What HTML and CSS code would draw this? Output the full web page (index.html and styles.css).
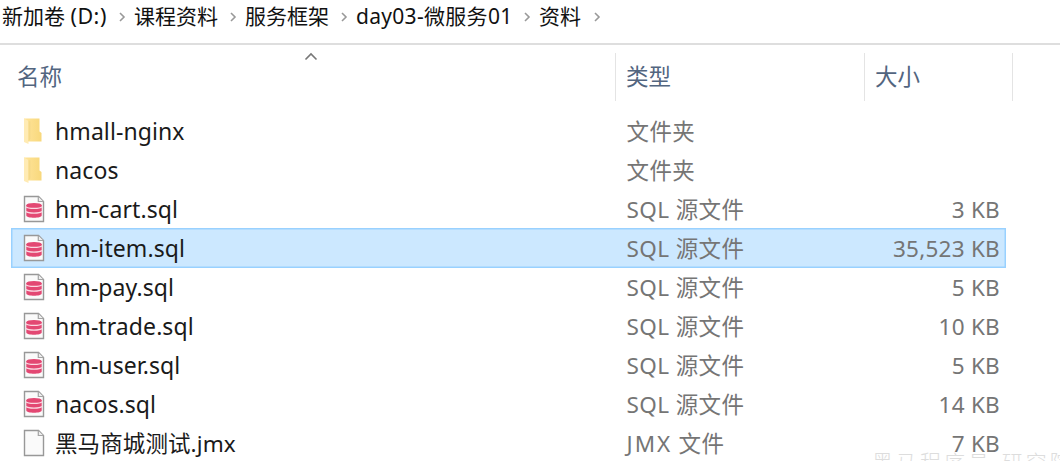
FILE: index.html
```html
<!DOCTYPE html>
<html lang="zh-CN">
<head>
<meta charset="utf-8">
<title>资料</title>
<link rel="stylesheet" href="styles.css">
</head>
<body>
<svg class="defs" width="0" height="0" aria-hidden="true">
  <defs>
    <linearGradient id="fold" x1="0" x2="1"><stop offset="0" stop-color="#ffe49a"/><stop offset="1" stop-color="#f8d87c"/></linearGradient>
    <symbol id="folder" viewBox="0 0 22 28">
      <path d="M1 1.500H16.500V14.500L18.500 16V24.500H5L1 23Z" fill="url(#fold)"/>
      <path d="M1 1.500L5.500 4V27L1 25Z" fill="#ffebb4"/>
      <path d="M5.500 24.500L7.500 22V4.500L5.500 4Z" fill="#f5d98a"/>
    </symbol>
    <symbol id="page" viewBox="0 0 22 28">
      <path d="M1.500 1.500H15.500L20.500 6.500V26.500H1.500Z" fill="#fafafa" stroke="#989898" stroke-width="1.400"/>
      <path d="M15.300 1.700V6.500H20.300" fill="#eee" stroke="#a4a4a4" stroke-width="1.200"/>
    </symbol>
    <symbol id="sql" viewBox="0 0 22 28">
      <use href="#page"/>
      <path d="M3.300 10V20.500C3.300 23.500 18.700 23.500 18.700 20.500V10Z" fill="#e34873"/>
      <ellipse cx="11" cy="10.200" rx="7.700" ry="2.300" fill="#e34873"/>
      <path d="M3 11.800C5 13.900 17 13.900 19 11.800M3 16.500C5 18.600 17 18.600 19 16.500" fill="none" stroke="#fbd9e3" stroke-width="1.100"/>
    </symbol>
    <symbol id="chev" viewBox="0 0 8 12"><path d="M2 2L6 6L2 10" fill="none" stroke="#999" stroke-width="1.600"/></symbol>
  </defs>
</svg>
<main class="explorer">
  <nav class="crumbs">
    <span class="crumb drive">新加卷 <span class="letter">(D:)</span></span><svg class="chev"><use href="#chev"/></svg>
    <span class="crumb four">课程资料</span><svg class="chev"><use href="#chev"/></svg>
    <span class="crumb four">服务框架</span><svg class="chev"><use href="#chev"/></svg>
    <span class="crumb day">day03-微服务01</span><svg class="chev"><use href="#chev"/></svg>
    <span class="crumb two">资料</span><svg class="chev"><use href="#chev"/></svg>
  </nav>
  <header class="head">
    <div class="col-name">名称<svg class="sort" viewBox="0 0 14 9"><path d="M1.500 7.500L7 2L12.500 7.500" fill="none" stroke="#777" stroke-width="1.600"/></svg></div>
    <div class="col-type">类型</div>
    <div class="col-size">大小</div>
  </header>
  <section class="list">
    <div class="row"><svg class="icon"><use href="#folder"/></svg><span class="name">hmall-nginx</span><span class="type">文件夹</span><span class="size"></span></div>
    <div class="row"><svg class="icon"><use href="#folder"/></svg><span class="name">nacos</span><span class="type">文件夹</span><span class="size"></span></div>
    <div class="row"><svg class="icon"><use href="#sql"/></svg><span class="name">hm-cart.sql</span><span class="type">SQL 源文件</span><span class="size">3 KB</span></div>
    <div class="row selected"><svg class="icon"><use href="#sql"/></svg><span class="name">hm-item.sql</span><span class="type">SQL 源文件</span><span class="size">35,523 KB</span></div>
    <div class="row"><svg class="icon"><use href="#sql"/></svg><span class="name">hm-pay.sql</span><span class="type">SQL 源文件</span><span class="size">5 KB</span></div>
    <div class="row"><svg class="icon"><use href="#sql"/></svg><span class="name">hm-trade.sql</span><span class="type">SQL 源文件</span><span class="size">10 KB</span></div>
    <div class="row"><svg class="icon"><use href="#sql"/></svg><span class="name">hm-user.sql</span><span class="type">SQL 源文件</span><span class="size">5 KB</span></div>
    <div class="row"><svg class="icon"><use href="#sql"/></svg><span class="name">nacos.sql</span><span class="type">SQL 源文件</span><span class="size">14 KB</span></div>
    <div class="row"><svg class="icon"><use href="#page"/></svg><span class="name cjk">黑马商城测试.jmx</span><span class="type"><span class="ext">JMX</span> 文件</span><span class="size">7 KB</span></div>
  </section>
  <div class="watermark">黑马程序员-研究院</div>
</main>
</body>
</html>
```
FILE: styles.css
```css
* { box-sizing: border-box; }
body {
  margin: 0;
  background: #fff;
  font-family: "Noto Sans", "Noto Sans CJK SC", sans-serif;
  white-space: nowrap;
}
.defs { position: absolute; }
.explorer {
  position: relative;
  width: 1060px;
  height: 461px;
  overflow: hidden;
}
.crumbs {
  display: flex;
  align-items: center;
  height: 45px;
  padding: 0 0 11px 2px;
  border-bottom: 2px solid #dedede;
  font-size: 21px;
  line-height: 32px;
  color: #111;
}
.crumb { flex: none; }
.drive { width: 116px; }
.letter { font-size: 21.500px; letter-spacing: 0.500px; }
.four { width: 95px; }
.day { width: 167px; letter-spacing: 0.300px; }
.two { width: 54px; }
.chev { flex: none; width: 8px; height: 12px; margin: 2px 8px 0 0; }
.head {
  display: grid;
  grid-template-columns: 616px 249px 148px;
  height: 48px;
  margin-top: 8px;
  font-size: 22.500px;
  line-height: 48px;
  color: #52657f;
}
.head > div { border-right: 1.500px solid #e4e4e4; }
.col-name { position: relative; padding-left: 17px; }
.col-type, .col-size { padding-left: 10px; }
.sort { position: absolute; left: 304px; top: -1px; width: 14px; height: 9px; }
.list { padding: 10px 0 0 11px; }
.row {
  display: grid;
  grid-template-columns: 43px 571px 200px 1fr;
  align-items: center;
  width: 995px;
  height: 39px;
  padding-left: 1px;
  font-size: 22.500px;
  line-height: 37px;
}
.row > span { padding-top: 2px; }
.selected {
  height: 40px;
  margin-bottom: -1px;
  padding-bottom: 1px;
  background: #cce8ff;
  box-shadow: inset 0 0 0 1.500px #99d1ff;
}
.icon { width: 22px; height: 28px; margin-left: 11px; }
.name { font-size: 23px; color: #1a1a1a; letter-spacing: 0.080px; }
.cjk { font-size: 22.500px; letter-spacing: 0.100px; }
.type, .size { color: #757575; }
.type { padding-left: 0.500px; letter-spacing: 0.400px; }
.ext { letter-spacing: 2px; }
.size { text-align: right; padding-right: 6px; letter-spacing: 0.250px; }
.watermark {
  position: absolute;
  left: 872px;
  top: 447px;
  font-size: 21px;
  line-height: 30px;
  letter-spacing: 3px;
  font-weight: 300;
  color: #ddd;
}
```
